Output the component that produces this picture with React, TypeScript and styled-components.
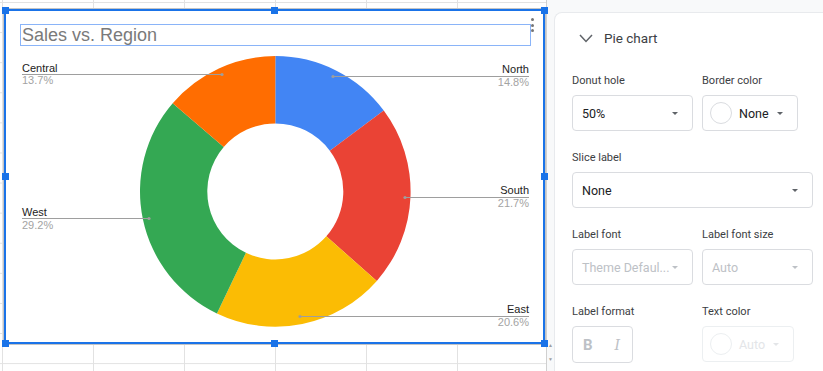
import * as React from 'react';
import styled, { createGlobalStyle } from 'styled-components';

type Slice = {
  name: string;
  value: number;
  color: string;
};

type SliceLabel = {
  name: string;
  pct: string;
  side: 'left' | 'right';
  lineY: number;
  dotX: number;
  nameY: number;
  pctY: number;
};

type Tone = 'normal' | 'disabled' | 'faint';

const SLICES: Slice[] = [
  { name: 'North', value: 14.8, color: '#4285f4' },
  { name: 'South', value: 21.7, color: '#ea4335' },
  { name: 'East', value: 20.6, color: '#fbbc04' },
  { name: 'West', value: 29.2, color: '#34a853' },
  { name: 'Central', value: 13.7, color: '#ff6d01' },
];

const LABELS: SliceLabel[] = [
  { name: 'Central', pct: '13.7%', side: 'left', lineY: 74.5, dotX: 222, nameY: 72, pctY: 84 },
  { name: 'North', pct: '14.8%', side: 'right', lineY: 76.5, dotX: 333, nameY: 73, pctY: 86 },
  { name: 'South', pct: '21.7%', side: 'right', lineY: 197.5, dotX: 405, nameY: 194, pctY: 207 },
  { name: 'West', pct: '29.2%', side: 'left', lineY: 218.5, dotX: 149, nameY: 216, pctY: 229 },
  { name: 'East', pct: '20.6%', side: 'right', lineY: 316.5, dotX: 300, nameY: 313, pctY: 326 },
];

const CX = 275.3;
const CY = 191.4;
const OUTER = 135.3;
const INNER = 68;
const LEFT_EDGE = 22;
const RIGHT_EDGE = 529;

const TONES: Record<Tone, { border: string; text: string; caret: string }> = {
  normal: { border: '#dadce0', text: '#202124', caret: '#5f6368' },
  disabled: { border: '#dadce0', text: '#bdc1c6', caret: '#bdc1c6' },
  faint: { border: '#eceff1', text: '#e3e5e8', caret: '#e3e5e8' },
};

function arcPath(a0: number, a1: number) {
  const point = (r: number, a: number) => {
    const rad = ((a - 90) * Math.PI) / 180;
    return `${CX + r * Math.cos(rad)} ${CY + r * Math.sin(rad)}`;
  };
  const large = a1 - a0 > 180 ? 1 : 0;
  return [
    `M${point(OUTER, a0)}`,
    `A${OUTER} ${OUTER} 0 ${large} 1 ${point(OUTER, a1)}`,
    `L${point(INNER, a1)}`,
    `A${INNER} ${INNER} 0 ${large} 0 ${point(INNER, a0)}`,
    'Z',
  ].join(' ');
}

function Donut() {
  const total = SLICES.reduce((sum, s) => sum + s.value, 0);
  let angle = 0;

  return (
    <Plot viewBox="6 46 537 296" width={537} height={296}>
      {SLICES.map((slice) => {
        const start = angle;
        angle += (slice.value / total) * 360;
        return <path key={slice.name} d={arcPath(start, angle)} fill={slice.color} />;
      })}
      {LABELS.map((label) => {
        const isLeft = label.side === 'left';
        const textX = isLeft ? LEFT_EDGE : RIGHT_EDGE;
        const anchor = isLeft ? 'start' : 'end';
        return (
          <g key={label.name}>
            <line
              x1={isLeft ? LEFT_EDGE : label.dotX}
              x2={isLeft ? label.dotX : RIGHT_EDGE}
              y1={label.lineY}
              y2={label.lineY}
              stroke="#9e9e9e"
              strokeWidth={1}
            />
            <circle cx={label.dotX} cy={label.lineY} r={1.6} fill="#9e9e9e" />
            <SliceName x={textX} y={label.nameY} textAnchor={anchor}>
              {label.name}
            </SliceName>
            <SlicePct x={textX} y={label.pctY} textAnchor={anchor}>
              {label.pct}
            </SlicePct>
          </g>
        );
      })}
    </Plot>
  );
}

function Caret({ tone }: { tone: Tone }) {
  return (
    <svg width="6" height="3" viewBox="0 0 6 3">
      <path d="M0 0h6L3 3z" fill={TONES[tone].caret} />
    </svg>
  );
}

function Select({ value, tone = 'normal', width }: { value: string; tone?: Tone; width?: number }) {
  return (
    <SelectBox $tone={tone} $width={width}>
      <SelectValue>{value}</SelectValue>
      <Caret tone={tone} />
    </SelectBox>
  );
}

function ColorSelect({ value, tone = 'normal', width }: { value: string; tone?: Tone; width: number }) {
  return (
    <ColorBox $tone={tone} $width={width}>
      <Swatch $tone={tone} />
      <SelectValue>{value}</SelectValue>
      <Caret tone={tone} />
    </ColorBox>
  );
}

function App() {
  return (
    <>
      <GlobalStyle />
      <Page>
        <Sheet>
          <ChartFrame>
            <Handle $x="start" $y="start" />
            <Handle $x="middle" $y="start" />
            <Handle $x="end" $y="start" />
            <Handle $x="start" $y="middle" />
            <Handle $x="end" $y="middle" />
            <Handle $x="start" $y="end" />
            <Handle $x="middle" $y="end" />
            <Handle $x="end" $y="end" />
            <Kebab>
              <Dot />
              <Dot />
              <Dot />
            </Kebab>
            <ChartHeader>
              <TitleBox>Sales vs. Region</TitleBox>
            </ChartHeader>
            <Donut />
          </ChartFrame>
        </Sheet>

        <ScrollTrack>
          <ScrollArrow>▲</ScrollArrow>
          <ScrollArrow>▼</ScrollArrow>
        </ScrollTrack>

        <Panel>
          <Card>
            <SectionHeader>
              <svg width="14" height="9" viewBox="0 0 14 9">
                <polyline points="1,1 7,7.5 13,1" fill="none" stroke="#5f6368" strokeWidth="1.5" />
              </svg>
              <SectionTitle>Pie chart</SectionTitle>
            </SectionHeader>

            <Fields>
              <Field>
                <FieldLabel>Donut hole</FieldLabel>
                <Select value="50%" />
              </Field>
              <Field>
                <FieldLabel>Border color</FieldLabel>
                <ColorSelect value="None" width={96} />
              </Field>

              <Field $wide>
                <FieldLabel>Slice label</FieldLabel>
                <Select value="None" />
              </Field>

              <Field>
                <FieldLabel>Label font</FieldLabel>
                <Select value="Theme Defaul..." tone="disabled" />
              </Field>
              <Field>
                <FieldLabel>Label font size</FieldLabel>
                <Select value="Auto" tone="disabled" />
              </Field>

              <Field>
                <FieldLabel>Label format</FieldLabel>
                <FormatGroup>
                  <FormatButton>B</FormatButton>
                  <FormatButton $italic>I</FormatButton>
                </FormatGroup>
              </Field>
              <Field>
                <FieldLabel>Text color</FieldLabel>
                <ColorSelect value="Auto" tone="faint" width={92} />
              </Field>
            </Fields>
          </Card>
        </Panel>
      </Page>
    </>
  );
}

const GlobalStyle = createGlobalStyle`
  html, body {
    margin: 0;
    padding: 0;
  }
  body {
    width: 823px;
    height: 371px;
    overflow: hidden;
    background: #fff;
    font-family: Roboto, 'Liberation Sans', Arial, sans-serif;
  }
`;

const Page = styled.div`
  display: flex;
  width: 823px;
  height: 371px;
`;

const Sheet = styled.div`
  width: 546px;
  height: 371px;
  box-sizing: border-box;
  padding: 9px 0 0 4px;
  background-color: #fff;
  background-image: linear-gradient(to right, #e2e2e2 1px, transparent 1px),
    linear-gradient(to bottom, #e2e2e2 1px, transparent 1px);
  background-size: 91px 100%, 100% 30.1px;
  background-position: 2px 0, 0 2px;
`;

const ChartFrame = styled.div`
  position: relative;
  width: 541px;
  height: 335px;
  box-sizing: border-box;
  border: 2px solid #1a73e8;
  box-shadow: 0 0 0 1px #c4c4c4;
  background: #fff;
  display: flex;
  flex-direction: column;
`;

const handleOffset = {
  start: '-4.5px',
  middle: 'calc(50% - 3.5px)',
  end: 'calc(100% - 2.5px)',
};

const Handle = styled.span<{ $x: keyof typeof handleOffset; $y: keyof typeof handleOffset }>`
  position: absolute;
  width: 7px;
  height: 7px;
  background: #1a73e8;
  left: ${(p) => handleOffset[p.$x]};
  top: ${(p) => handleOffset[p.$y]};
`;

const Kebab = styled.div`
  position: absolute;
  top: 7px;
  right: 9px;
  display: flex;
  flex-direction: column;
  gap: 2.5px;
`;

const Dot = styled.span`
  width: 3px;
  height: 3px;
  border-radius: 50%;
  background: #757575;
`;

const ChartHeader = styled.div`
  padding: 13px 0 0 14px;
`;

const TitleBox = styled.div`
  width: 511px;
  height: 22px;
  box-sizing: border-box;
  border: 1px solid #8ab4f8;
  padding-left: 1px;
  font-family: 'Liberation Sans', Arial, sans-serif;
  font-size: 18px;
  line-height: 20px;
  color: #7a7a7a;
`;

const Plot = styled.svg`
  display: block;
`;

const SliceName = styled.text`
  font-family: 'Liberation Sans', Arial, sans-serif;
  font-size: 11px;
  fill: #222;
`;

const SlicePct = styled(SliceName)`
  fill: #a3a3a3;
`;

const ScrollTrack = styled.div`
  width: 8px;
  height: 371px;
  border-left: 1px solid #d0d0d0;
  background: #f8f9fa;
  display: flex;
  flex-direction: column;
  justify-content: flex-end;
  padding-bottom: 5px;
  box-sizing: border-box;
`;

const ScrollArrow = styled.span`
  height: 14px;
  font-size: 5px;
  line-height: 14px;
  text-align: center;
  color: #9e9e9e;
`;

const Panel = styled.div`
  flex: 1;
  background: #f8f9fa;
  padding-top: 12px;
  display: flex;
`;

const Card = styled.div`
  flex: 1;
  background: #fff;
  border: 1px solid #e8eaed;
  border-right: none;
  border-bottom: none;
  border-top-left-radius: 8px;
  padding: 11px 0 0 17px;
`;

const SectionHeader = styled.div`
  height: 28px;
  display: flex;
  align-items: center;
  gap: 11px;
  padding-left: 7px;
  margin-bottom: 21px;
`;

const SectionTitle = styled.span`
  font-size: 13.5px;
  color: #3c4043;
`;

const Fields = styled.div`
  display: grid;
  grid-template-columns: 121px 111px;
  column-gap: 9px;
  row-gap: 19px;
`;

const Field = styled.div<{ $wide?: boolean }>`
  display: flex;
  flex-direction: column;
  align-items: flex-start;
  gap: 6px;
  grid-column: ${(p) => (p.$wide ? '1 / span 2' : 'auto')};
`;

const FieldLabel = styled.div`
  font-size: 11px;
  line-height: 16px;
  color: #3c4043;
`;

const SelectBox = styled.div<{ $tone: Tone; $width?: number }>`
  box-sizing: border-box;
  width: ${(p) => (p.$width ? `${p.$width}px` : '100%')};
  height: 36px;
  display: flex;
  align-items: center;
  padding: 0 14px 0 9px;
  border: 1px solid ${(p) => TONES[p.$tone].border};
  border-radius: 4px;
  font-size: 12.5px;
  color: ${(p) => TONES[p.$tone].text};
`;

const ColorBox = styled(SelectBox)`
  padding-left: 7px;
  gap: 7px;
`;

const SelectValue = styled.span`
  flex: 1;
  white-space: nowrap;
`;

const Swatch = styled.span<{ $tone: Tone }>`
  width: 22px;
  height: 22px;
  box-sizing: border-box;
  border-radius: 50%;
  border: 1px solid ${(p) => TONES[p.$tone].border};
`;

const FormatGroup = styled.div`
  display: flex;
  width: 61px;
  height: 37px;
  box-sizing: border-box;
  border: 1px solid #dadce0;
  border-radius: 4px;
`;

const FormatButton = styled.span<{ $italic?: boolean }>`
  flex: 1;
  display: flex;
  align-items: center;
  justify-content: center;
  color: #bdc1c6;
  font-family: ${(p) => (p.$italic ? "'DejaVu Serif', serif" : "Roboto, 'Liberation Sans', sans-serif")};
  font-style: ${(p) => (p.$italic ? 'italic' : 'normal')};
  font-weight: ${(p) => (p.$italic ? 400 : 700)};
  font-size: ${(p) => (p.$italic ? '14px' : '15px')};
`;

export default App;
